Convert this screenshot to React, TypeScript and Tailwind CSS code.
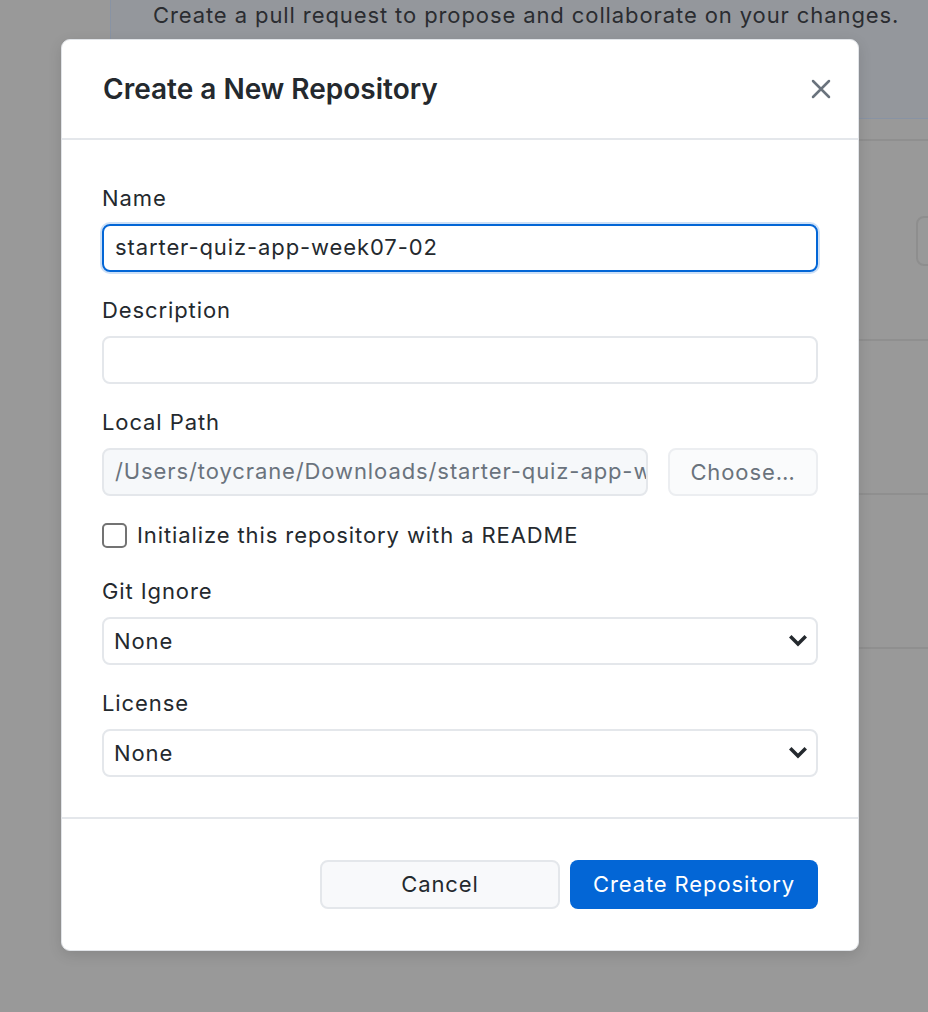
import React from 'react';

const Chevron: React.FC = () => (
    <svg className="pointer-events-none absolute right-[9px] top-1/2 -translate-y-1/2" width="18" height="12" viewBox="0 0 18 12">
        <polyline points="2.5,2.5 9,9 15.5,2.5" fill="none" stroke="#24292e" strokeWidth="3.5" strokeLinecap="square" />
    </svg>
);

const Field: React.FC<{ label: string; children: React.ReactNode }> = ({ label, children }) => (
    <div className="flex flex-col gap-[12px]">
        <label className="text-[22px] leading-[28px] tracking-[0.9px] text-[#24292e]">{label}</label>
        {children}
    </div>
);

const SelectBox: React.FC<{ value: string }> = ({ value }) => (
    <div className="relative h-[48px] rounded-[8px] border-2 border-[#e4e7eb] bg-white">
        <div className="flex h-full items-center px-[10px] text-[22px] tracking-[0.9px] text-[#24292e]">{value}</div>
        <Chevron />
    </div>
);

const App: React.FC = () => {
    return (
        <div
            className="relative h-[1012px] w-[928px] overflow-hidden bg-[#999999]"
            style={{ fontFamily: 'Inter, "Noto Sans", sans-serif' }}
        >
            {/* dimmed app behind the dialog */}
            <div className="ml-[110px] flex flex-col">
                <div className="h-[119px] border-b border-l border-[#8893a4] bg-[#94979c] pl-[42px]">
                    <p className="text-[22px] leading-[30px] tracking-[0.9px] text-[#2a2c30]">
                        Create a pull request to propose and collaborate on your changes.
                    </p>
                </div>
                <div className="h-[22px] border-b-2 border-[#8f8f8f]" />
                <div className="relative h-[200px] border-b-2 border-[#8f8f8f]">
                    <div className="absolute left-[806px] top-[75px] h-[50px] w-[80px] rounded-[8px] border-2 border-[#8e8e8e]" />
                </div>
                <div className="h-[154px] border-b-2 border-[#8f8f8f]" />
                <div className="h-[154px] border-b-2 border-[#8f8f8f]" />
            </div>

            {/* dialog */}
            <div className="absolute left-[61px] top-[39px] w-[798px] rounded-[9px] border border-[#e1e4e8] bg-white shadow-[0_4px_14px_rgba(0,0,0,0.12)]">
                <div className="flex h-[100px] items-center justify-between border-b-2 border-[#e4e7eb] pl-[41px] pr-[26px]">
                    <h1 className="text-[28px] font-semibold text-[#24292e]">Create a New Repository</h1>
                    <button className="flex h-[22px] w-[22px] items-center justify-center">
                        <svg width="20" height="20" viewBox="0 0 20 20">
                            <path d="M2 2 L18 18 M18 2 L2 18" stroke="#6a737d" strokeWidth="2.5" strokeLinecap="round" />
                        </svg>
                    </button>
                </div>

                <div className="flex flex-col gap-[24px] px-[40px] pb-[40px] pt-[44px]">
                    <Field label="Name">
                        <div className="h-[48px] rounded-[8px] border-2 border-[#0366d6] px-[11px] text-[22px] leading-[43px] tracking-[0.9px] text-[#24292e] shadow-[0_0_0_2px_rgba(3,102,214,0.2)]">
                            starter-quiz-app-week07-02
                        </div>
                    </Field>
                    <Field label="Description">
                        <div className="h-[48px] rounded-[8px] border-2 border-[#e4e7eb] bg-white" />
                    </Field>
                    <Field label="Local Path">
                        <div className="flex gap-[20px]">
                            <div className="h-[48px] min-w-0 flex-1 overflow-hidden whitespace-nowrap rounded-[8px] border-2 border-[#e4e7eb] bg-[#f6f8fa] px-[11px] text-[22px] leading-[43px] tracking-[0.9px] text-[#6a737d]">
                                /Users/toycrane/Downloads/starter-quiz-app-week07-02
                            </div>
                            <button className="h-[48px] w-[150px] shrink-0 rounded-[8px] border-2 border-[#eceef1] bg-[#fafbfc] text-[22px] tracking-[0.9px] text-[#6a737d]">
                                Choose…
                            </button>
                        </div>
                    </Field>
                    <label className="mb-[4px] mt-[1px] flex items-center gap-[10px] text-[22px] leading-[28px] tracking-[0.9px] text-[#24292e]">
                        <span className="h-[25px] w-[25px] shrink-0 rounded-[5px] border-2 border-[#737373] bg-white" />
                        Initialize this repository with a README
                    </label>
                    <Field label="Git Ignore">
                        <SelectBox value="None" />
                    </Field>
                    <Field label="License">
                        <SelectBox value="None" />
                    </Field>
                </div>

                <div className="flex justify-end gap-[10px] border-t-2 border-[#e4e7eb] px-[40px] py-[41px]">
                    <button className="h-[49px] w-[240px] rounded-[8px] border-2 border-[#e4e7eb] bg-[#f8f9fb] text-[22px] tracking-[0.9px] text-[#24292e]">
                        Cancel
                    </button>
                    <button className="h-[49px] w-[248px] rounded-[8px] bg-[#0366d6] text-[22px] tracking-[0.9px] text-white">
                        Create Repository
                    </button>
                </div>
            </div>
        </div>
    );
};

export default App;
